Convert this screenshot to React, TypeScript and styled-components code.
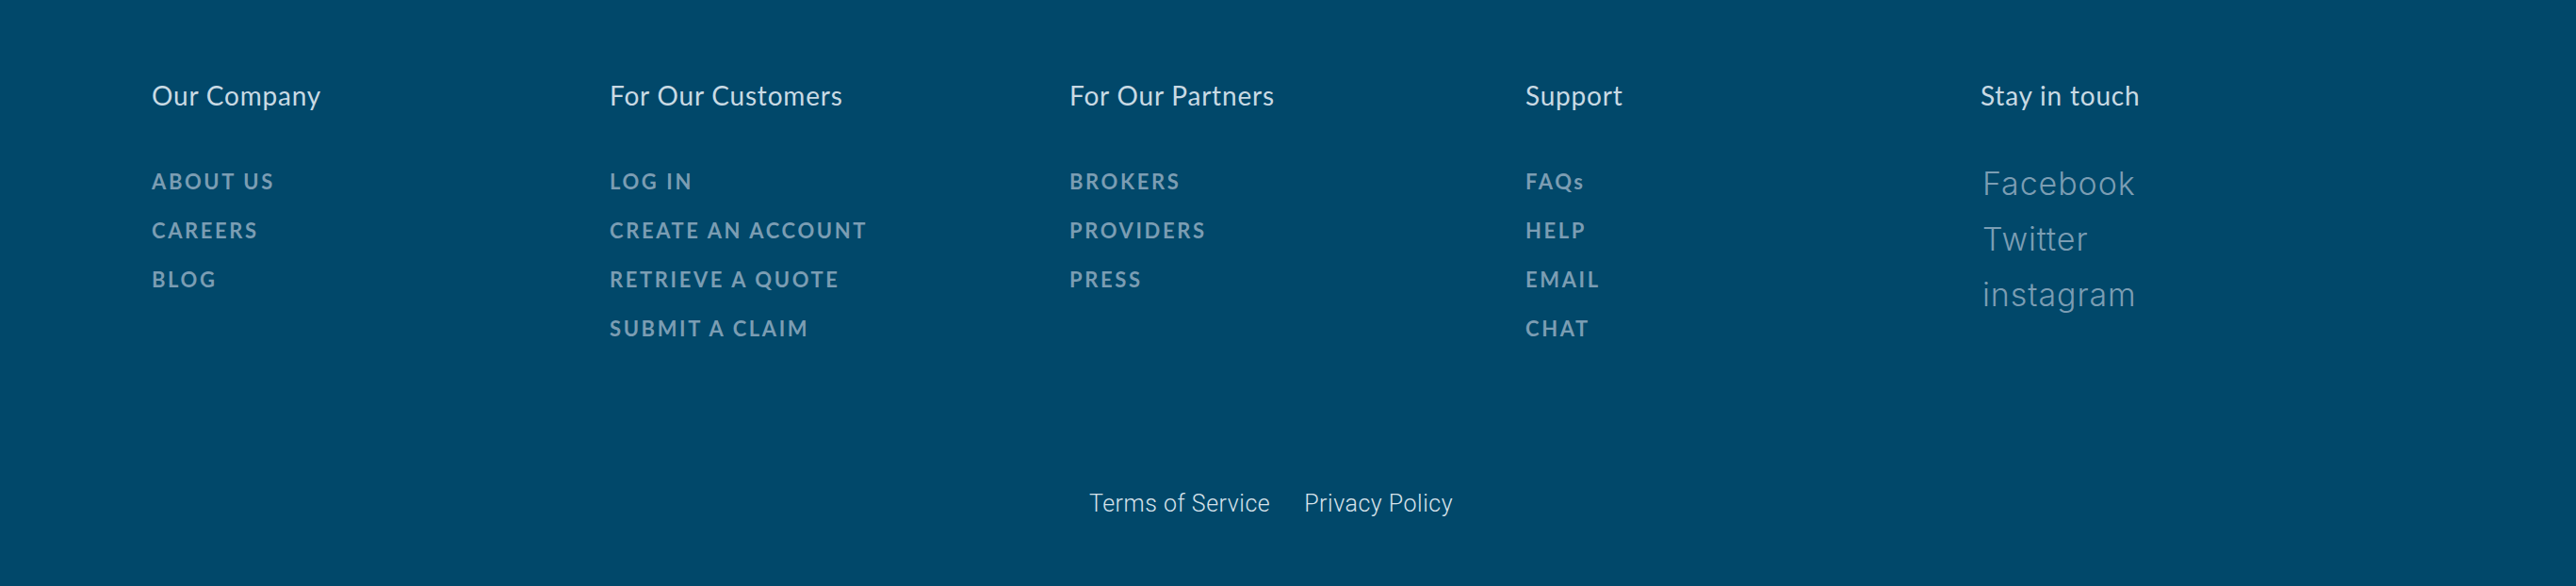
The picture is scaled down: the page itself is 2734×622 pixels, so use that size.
import React from "react";
import styled, { createGlobalStyle } from "styled-components";

const Global = createGlobalStyle`
  html, body { margin: 0; padding: 0; background: #01486a; }
  * { box-sizing: border-box; }
`;

const Footer = styled.footer`
  background: #01486a;
  height: 622px;
  display: flex;
  flex-direction: column;
`;

const Columns = styled.div`
  display: grid;
  grid-template-columns: 486px 488px 484px 483px 485px;
  padding: 84px 0 0 161px;
`;

const Column = styled.div`
  display: flex;
  flex-direction: column;
`;

const Heading = styled.h3`
  margin: 0 0 64px 0;
  font-family: "Lato", "Open Sans", sans-serif;
  font-weight: 400;
  font-size: 28px;
  line-height: 34px;
  letter-spacing: 0.8px;
  color: #c9dae4;
`;

const LinkList = styled.ul<{ $gap: number; $shift?: number }>`
  list-style: none;
  margin: ${(p) => p.$shift ?? 0}px 0 0 0;
  padding: 0;
  display: flex;
  flex-direction: column;
  gap: ${(p) => p.$gap}px;
`;

const NavLink = styled.a<{ $plain?: boolean }>`
  display: block;
  font-family: "Lato", sans-serif;
  font-weight: 700;
  font-size: 22px;
  line-height: 22px;
  letter-spacing: 2.6px;
  text-transform: ${(p) => (p.$plain ? "none" : "uppercase")};
  color: #7b9db3;
  text-decoration: none;
`;

const SocialLink = styled.a`
  display: block;
  padding-left: 2px;
  font-family: "Inter", "Roboto", sans-serif;
  font-weight: 300;
  font-size: 34px;
  line-height: 34px;
  letter-spacing: 0.9px;
  color: #7b9db3;
  text-decoration: none;
`;

const Legal = styled.nav`
  margin-top: auto;
  margin-bottom: 72px;
  display: flex;
  justify-content: center;
  gap: 36px;
  padding-right: 36px;
`;

const LegalLink = styled.a`
  font-family: "Roboto", sans-serif;
  font-weight: 300;
  font-size: 25px;
  line-height: 30px;
  letter-spacing: 0.5px;
  color: #d6e2ea;
  text-decoration: none;
`;

const columns: { title: string; links: string[] }[] = [
  { title: "Our Company", links: ["About Us", "Careers", "Blog"] },
  {
    title: "For Our Customers",
    links: ["Log In", "Create an Account", "Retrieve a Quote", "Submit a Claim"],
  },
  { title: "For Our Partners", links: ["Brokers", "Providers", "Press"] },
  { title: "Support", links: ["FAQs", "Help", "Email", "Chat"] },
];

export default function App() {
  return (
    <>
      <Global />
      <Footer>
        <Columns>
          {columns.map((c) => (
            <Column key={c.title}>
              <Heading>{c.title}</Heading>
              <LinkList $gap={30}>
                {c.links.map((l) => (
                  <li key={l}>
                    <NavLink href="#" $plain={l === "FAQs"}>
                      {l}
                    </NavLink>
                  </li>
                ))}
              </LinkList>
            </Column>
          ))}
          <Column>
            <Heading>Stay in touch</Heading>
            <LinkList $gap={25} $shift={-4}>
              {["Facebook", "Twitter", "instagram"].map((s) => (
                <li key={s}>
                  <SocialLink href="#">{s}</SocialLink>
                </li>
              ))}
            </LinkList>
          </Column>
        </Columns>
        <Legal>
          <LegalLink href="#">Terms of Service</LegalLink>
          <LegalLink href="#">Privacy Policy</LegalLink>
        </Legal>
      </Footer>
    </>
  );
}
